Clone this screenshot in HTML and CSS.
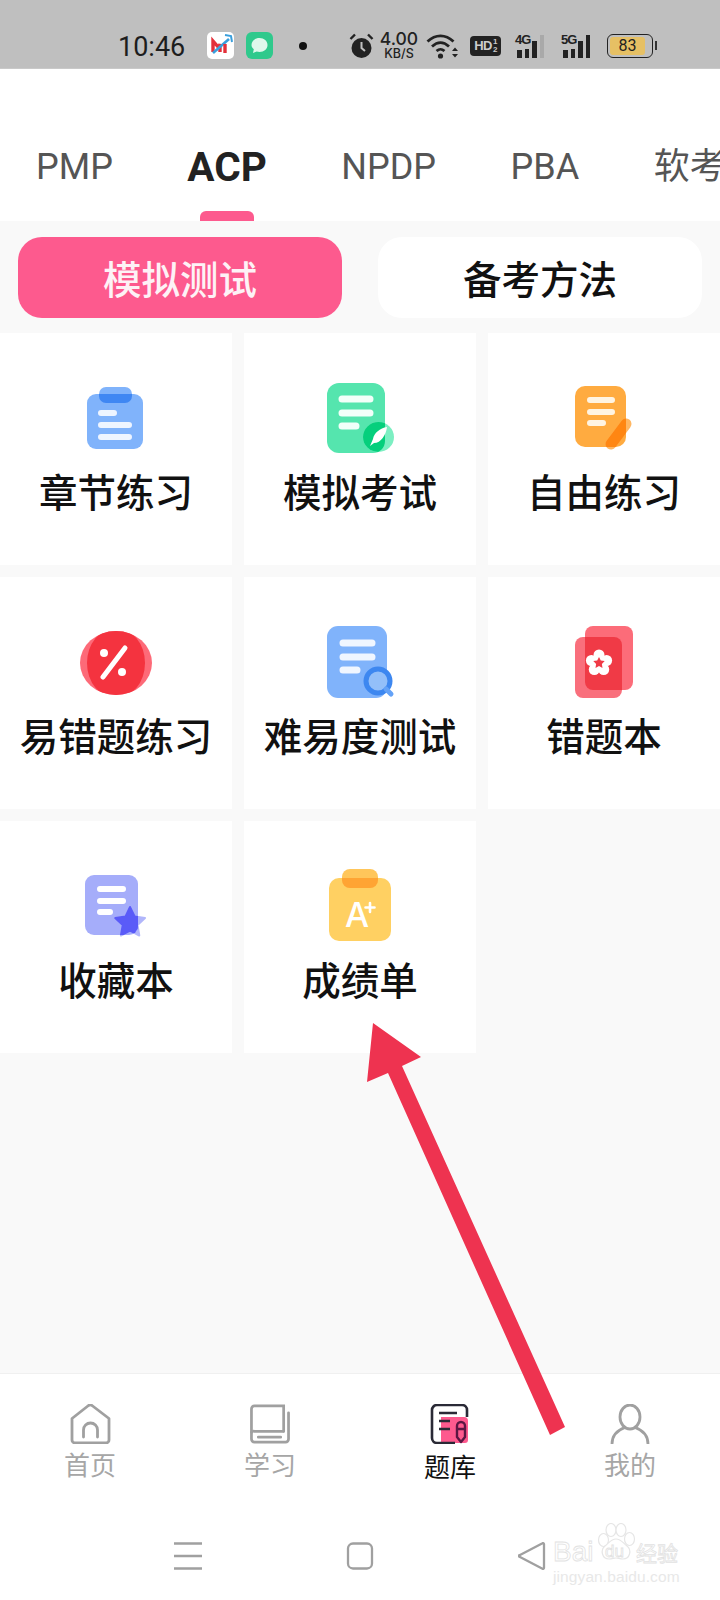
FILE: index.html
```html
<!DOCTYPE html>
<html lang="zh-CN">
<head>
<meta charset="utf-8">
<title>题库</title>
<link rel="stylesheet" href="styles.css">
</head>
<body>
<div class="page">
  <header class="status">
    <span class="time">10:46</span>
    <svg class="app" width="27" height="27" viewBox="0 0 27 27"><rect width="27" height="27" rx="5" fill="#fff"/><path d="M6 20V9l6 7 1-4v8" fill="none" stroke="#e3303a" stroke-width="3.4"/><path d="M6 21 22 7" stroke="#3a9fdc" stroke-width="2.6"/><path d="M18 3l6 1 1 6" fill="none" stroke="#3a9fdc" stroke-width="2"/><path d="M18 12v9" stroke="#e3303a" stroke-width="3.4"/></svg>
    <svg class="app app2" width="27" height="27" viewBox="0 0 27 27"><rect width="27" height="27" rx="6" fill="#2fc98c"/><path d="M13.5 6c4.6 0 8 3 8 7s-3.400 7-8 7c-1 0-2-.2-2.800-.5L7 21l.8-3.800C6.300 16 5.500 14.600 5.500 13c0-4 3.400-7 8-7z" fill="#dff8ec"/></svg>
    <span class="dot"></span>
    <svg class="alarm" width="25" height="26" viewBox="0 0 25 26"><circle cx="12.500" cy="15" r="10" fill="#222"/><path d="M12.500 9v6l3.500 3" fill="none" stroke="#bfbfbf" stroke-width="2"/><path d="M1.500 6 6 1.500M23.500 6 19 1.500" stroke="#222" stroke-width="2.400"/></svg>
    <span class="speed"><span class="speed-num">4.00</span><span class="speed-unit">KB/S</span></span>
    <svg class="wifi" width="33" height="26" viewBox="0 0 33 26"><path d="M1.500 8.500C9.500 1 19.500 1 27.500 8.500M6 13.500c5.500-5 11.500-5 17 0M10.500 18c3-2.500 5-2.500 8 0" fill="none" stroke="#222" stroke-width="2.800"/><circle cx="14.500" cy="23" r="2.600" fill="#222"/><path d="M26 18l3-3.500 3 3.500zM26 21l3 3.500 3-3.500z" fill="#222"/></svg>
    <span class="hd"><span class="hd-main">HD</span><span class="hd-frac"><span>1</span><span>2</span></span></span>
    <span class="signal sig4"><span class="net">4G</span><i class="b1"></i><i class="b2"></i><i class="b3"></i><i class="b4 off"></i></span>
    <span class="signal sig5"><span class="net">5G</span><i class="b1"></i><i class="b2"></i><i class="b3"></i><i class="b4"></i></span>
    <span class="battery"><span class="battery-box"><span class="battery-fill">83</span></span><span class="battery-tip"></span></span>
  </header>

  <nav class="tabs">
    <span class="tab">PMP</span>
    <span class="tab active">ACP</span>
    <span class="tab">NPDP</span>
    <span class="tab">PBA</span>
    <span class="tab">软考</span>
  </nav>

  <main class="content">
    <div class="modes">
      <div class="mode on">模拟测试</div>
      <div class="mode">备考方法</div>
    </div>
    <div class="grid">
      <div class="card">
        <svg class="ico" width="80" height="80" viewBox="0 0 80 80"><rect x="11" y="16" width="56" height="55" rx="9" fill="#80b3fb"/><rect x="23" y="9" width="33" height="16" rx="7" fill="#80b3fb"/><path d="M23 16h33v2a7 7 0 0 1-7 7H30a7 7 0 0 1-7-7z" fill="#3f87f3"/><path d="M25 35h13M25 47h28M25 59h28" stroke="#eef5ff" stroke-width="6" stroke-linecap="round"/></svg>
        <span class="label">章节练习</span>
      </div>
      <div class="card">
        <svg class="ico" width="80" height="80" viewBox="0 0 80 80"><defs><clipPath id="c2"><rect x="7" y="5" width="58" height="70" rx="12"/></clipPath></defs><rect x="7" y="5" width="58" height="70" rx="12" fill="#55e5ae"/><path d="M22 21h28M22 35h28M22 48h14" stroke="#f2fff9" stroke-width="7" stroke-linecap="round"/><ellipse cx="58.500" cy="59" rx="15.500" ry="15" fill="#7cefc2"/><ellipse cx="58.500" cy="59" rx="15.500" ry="15" fill="#06cf7c" clip-path="url(#c2)"/><path d="M67 49c-7 1-13 6-14 12l-3 7 4-3c7 0 12-8 13-16z" fill="#fff"/></svg>
        <span class="label">模拟考试</span>
      </div>
      <div class="card">
        <svg class="ico" width="80" height="80" viewBox="0 0 80 80"><defs><clipPath id="c3"><rect x="11" y="8" width="51" height="61" rx="10"/></clipPath></defs><rect x="11" y="8" width="51" height="61" rx="10" fill="#ffab40"/><path d="M26 22h22M26 34h22M26 45h13" stroke="#fff4e2" stroke-width="6" stroke-linecap="round"/><path d="M62 46 47 66" stroke="#ffb763" stroke-width="11" stroke-linecap="round"/><path d="M62 46 47 66" stroke="#ff8612" stroke-width="11" stroke-linecap="round" clip-path="url(#c3)"/></svg>
        <span class="label">自由练习</span>
      </div>
      <div class="card">
        <svg class="ico" width="80" height="80" viewBox="0 0 80 80"><defs><clipPath id="c4"><ellipse cx="40" cy="41" rx="36" ry="32"/></clipPath></defs><ellipse cx="40" cy="41" rx="36" ry="32" fill="#fd6a78"/><ellipse cx="40" cy="41" rx="29" ry="35" fill="#f4333f" clip-path="url(#c4)"/><path d="M49 26 27 55" stroke="#fff" stroke-width="5" stroke-linecap="round"/><circle cx="28" cy="31" r="4" fill="#fff"/><circle cx="46" cy="50" r="4" fill="#fff"/></svg>
        <span class="label">易错题练习</span>
      </div>
      <div class="card">
        <svg class="ico" width="80" height="80" viewBox="0 0 80 80"><rect x="7" y="4" width="60" height="72" rx="11" fill="#80b3fb"/><path d="M23 21h29M23 35h29M23 48h14" stroke="#f0f6ff" stroke-width="7" stroke-linecap="round"/><circle cx="58" cy="59" r="12" fill="#93bff9" stroke="#3d87f0" stroke-width="5"/><path d="M66 67l5 5" stroke="#64a2f7" stroke-width="5" stroke-linecap="round"/></svg>
        <span class="label">难易度测试</span>
      </div>
      <div class="card">
        <svg class="ico" width="80" height="80" viewBox="0 0 80 80"><defs><clipPath id="c6"><rect x="11" y="15" width="47" height="61" rx="8"/></clipPath></defs><rect x="21" y="4" width="48" height="64" rx="8" fill="#fc6c79"/><rect x="11" y="15" width="47" height="61" rx="8" fill="#f96f7c"/><rect x="21" y="4" width="48" height="64" rx="8" fill="#f03a46" clip-path="url(#c6)"/><g fill="#fff"><circle cx="35" cy="41" r="8"/><circle cx="35" cy="33" r="5.500"/><circle cx="42.600" cy="38.500" r="5.500"/><circle cx="39.700" cy="47.500" r="5.500"/><circle cx="30.300" cy="47.500" r="5.500"/><circle cx="27.400" cy="38.500" r="5.500"/></g><path d="M35 35l1.800 3.600 3.900.5-2.800 2.800.6 4-3.500-1.900-3.500 1.900.6-4-2.800-2.800 3.900-.5z" fill="#f03a46"/></svg>
        <span class="label">错题本</span>
      </div>
      <div class="card">
        <svg class="ico" width="80" height="80" viewBox="0 0 80 80"><defs><clipPath id="c7"><rect x="9" y="9" width="53" height="60" rx="9"/></clipPath></defs><rect x="9" y="9" width="53" height="60" rx="9" fill="#a5adfa"/><path d="M24 23h23M24 35h23M24 46h10" stroke="#fff" stroke-width="6" stroke-linecap="round"/><path d="M54 41l4.800 9.600 10.200 1.500-7.500 7 1.800 10.400-9.300-5-9.100 5 1.800-10.400-7.500-7 10.200-1.500z" fill="#b1b6fb" stroke="#b1b6fb" stroke-width="2" stroke-linejoin="round"/><path d="M54 41l4.800 9.600 10.200 1.500-7.500 7 1.800 10.400-9.300-5-9.100 5 1.800-10.400-7.500-7 10.200-1.500z" fill="#5a5bf8" stroke="#5a5bf8" stroke-width="2" stroke-linejoin="round" clip-path="url(#c7)"/></svg>
        <span class="label">收藏本</span>
      </div>
      <div class="card">
        <svg class="ico" width="80" height="80" viewBox="0 0 80 80"><rect x="9" y="12" width="62" height="63" rx="10" fill="#ffd062"/><rect x="22" y="3" width="36" height="19" rx="8" fill="#ffc65a"/><path d="M22 12h36v2a8 8 0 0 1-8 8H30a8 8 0 0 1-8-8z" fill="#ffa433"/><text class="ico-a" x="37" y="61">A</text><path d="M50 37v9M45.500 41.500h9" stroke="#fff" stroke-width="2.600" stroke-linecap="round"/></svg>
        <span class="label">成绩单</span>
      </div>
    </div>
  </main>

  <footer class="bottom">
    <div class="nav">
      <div class="nav-item">
        <svg class="nav-ico" width="44" height="40" viewBox="0 0 44 40"><path d="M4 14.500 20.500 1.500a3 3 0 0 1 3.500 0L41 14.500V36a3 3 0 0 1-3 3H7a3 3 0 0 1-3-3z" fill="none" stroke="#a0a0a0" stroke-width="2.800" stroke-linejoin="round"/><path d="M15.500 33V26a7 7 0 0 1 14 0v7" fill="none" stroke="#a0a0a0" stroke-width="2.800" stroke-linecap="round"/></svg>
        <span class="nav-label">首页</span>
      </div>
      <div class="nav-item">
        <svg class="nav-ico" width="44" height="40" viewBox="0 0 44 41"><path d="M36 28V2H6a3 3 0 0 0-3 3v31a3 3 0 0 0 3 3h32a3 3 0 0 0 3-3V9" fill="none" stroke="#a0a0a0" stroke-width="2.800" stroke-linecap="round"/><path d="M3 29a3 3 0 0 1 3-1h30M10 34h23" fill="none" stroke="#a0a0a0" stroke-width="2.800" stroke-linecap="round"/></svg>
        <span class="nav-label">学习</span>
      </div>
      <div class="nav-item">
        <svg class="nav-ico" width="44" height="40" viewBox="0 0 44 40"><path d="M13 13h23a4 4 0 0 1 4 4v19a3 3 0 0 1-3 3H13z" fill="#fd5a8e"/><path d="M27 39H9a5 5 0 0 1-5-5V6a5 5 0 0 1 5-5h25a5 5 0 0 1 5 5v7" fill="none" stroke="#2a2a36" stroke-width="2.600"/><path d="M11 9h18M11 17h11M11 25h11" stroke="#2a2a36" stroke-width="2.500"/><path d="M29 22a4 4 0 0 1 8 0v11l-4 5-4-5zM29 25h8" fill="none" stroke="#5b1642" stroke-width="2.400" stroke-linejoin="round"/></svg>
        <span class="nav-label current">题库</span>
      </div>
      <div class="nav-item">
        <svg class="nav-ico" width="44" height="40" viewBox="0 0 44 40"><ellipse cx="22" cy="13" rx="10" ry="12" fill="none" stroke="#a0a0a0" stroke-width="2.800"/><path d="M4 40c0-9 6-14 13-16.500M40 40c0-9-6-14-13-16.500" fill="none" stroke="#a0a0a0" stroke-width="2.800"/></svg>
        <span class="nav-label">我的</span>
      </div>
    </div>
    <div class="sysbar">
      <svg width="28" height="28" viewBox="0 0 28 28"><path d="M0 1.500h28M0 14h28M0 26.500h28" stroke="#a0a0a0" stroke-width="2.500"/></svg>
      <svg width="28" height="28" viewBox="0 0 28 28"><rect x="2" y="1.500" width="24" height="25" rx="5" fill="none" stroke="#a0a0a0" stroke-width="2.300"/></svg>
      <svg width="28" height="28" viewBox="0 0 28 28"><path d="M26 2v24a1 1 0 0 1-1.500.8L2 15a1 1 0 0 1 0-2L24.500 1.200A1 1 0 0 1 26 2z" fill="none" stroke="#a0a0a0" stroke-width="2.300" stroke-linejoin="round"/></svg>
    </div>
  </footer>

  <svg class="arrow" width="720" height="1600" viewBox="0 0 720 1600"><path d="M373 1023 421 1057 402 1066 565 1427 550 1435 388 1073 367 1082z" fill="#ee3350"/></svg>

  <div class="mark">
    <svg class="paw" width="40" height="38" viewBox="0 0 40 38"><g fill="#fff" stroke="#e6e6e6" stroke-width="1.200"><ellipse cx="6.500" cy="17" rx="5" ry="6.500"/><ellipse cx="14" cy="7" rx="5" ry="6.500"/><ellipse cx="24" cy="7" rx="5" ry="6.500"/><ellipse cx="32.500" cy="16" rx="5" ry="6.500"/><path d="M19 16c5 0 7 4 11 7 5 4 3 13-4 13-3 0-5-1-7-1s-4 1-7 1c-7 0-9-9-4-13 4-3 6-7 11-7z"/></g></svg>
    <div class="mark-row"><span class="mark-bai">Bai</span><span class="mark-du">du</span><span class="mark-jy">经验</span></div>
    <div class="mark-url">jingyan.baidu.com</div>
  </div>
</div>
</body>
</html>
```

FILE: styles.css
```css
* { box-sizing: border-box; }
html, body { margin: 0; padding: 0; }
body { font-family: "Noto Sans CJK SC", Roboto, sans-serif; background: #fff; }
.page { position: relative; width: 720px; height: 1600px; overflow: hidden; display: flex; flex-direction: column; background: #fff; }

.status { height: 69px; flex: none; background: #bfbfbf; display: flex; align-items: center; padding: 23px 0 0 118px; color: #1d1d1d; border-bottom: 1px solid #c9c9c9; }
.time { font: 400 27px/1 Roboto, sans-serif; width: 68px; margin: 3px 21px 0 0; white-space: nowrap; }
.app2 { margin-left: 12px; }
.dot { width: 8px; height: 8px; border-radius: 50%; background: #111; margin: 0 42px 0 26px; }
.speed { display: flex; flex-direction: column; align-items: center; width: 38px; margin: 0 8px 0 6px; color: #222; }
.speed-num { font: 500 17.500px/14px Inter, sans-serif; white-space: nowrap; }
.speed-unit { font: 500 12.500px/12px Inter, sans-serif; margin-top: 2px; white-space: nowrap; }
.hd { display: flex; align-items: center; justify-content: center; gap: 1px; width: 31px; height: 20px; margin-left: 11px; border-radius: 4px; background: #222; color: #ccc; letter-spacing: -.5px; }
.hd-main { font: 700 13px/14px "Liberation Sans", sans-serif; }
.hd-frac { display: flex; flex-direction: column; font: 700 8px/8px "Liberation Sans", sans-serif; }
.signal { position: relative; display: flex; align-items: flex-end; gap: 3px; height: 24px; padding-left: 2px; }
.sig4 { width: 33px; margin-left: 14px; }
.sig5 { width: 35px; margin-left: 13px; }
.signal i { display: block; width: 4.500px; background: #222; }
.signal .off { background: #a9a9a9; }
.b1 { height: 8px; }
.b2 { height: 9px; }
.b3 { height: 17px; }
.b4 { height: 23px; }
.net { position: absolute; left: 0; top: -1px; font: 700 13px/13px "Liberation Sans", sans-serif; letter-spacing: -1px; color: #222; }
.battery { display: flex; align-items: center; gap: 2px; margin-left: 11px; }
.battery-box { width: 46px; height: 24px; border: 1.500px solid #222; border-radius: 6px; padding: 2px; display: flex; }
.battery-fill { width: 35px; background: #e6c064; border-radius: 3px; color: #222; font: 400 16px/17px Roboto, sans-serif; text-align: center; }
.battery-tip { width: 2px; height: 9px; background: #333; }

.tabs { height: 152px; flex: none; display: flex; align-items: center; gap: 74.500px; padding: 44px 0 0 36px; overflow: hidden; white-space: nowrap; font: 400 36px/1 Roboto, "Noto Sans CJK SC", sans-serif; color: #555; }
.tab { position: relative; flex: none; }
.tab.active { font-size: 40.500px; font-weight: 700; color: #222; }
.tab.active::after { content: ""; position: absolute; left: 13px; top: 64px; width: 54px; height: 11px; border-radius: 6px 6px 0 0; background: #fd5a8e; }

.content { flex: 1; background: #f9f9f9; }
.modes { display: flex; justify-content: space-between; padding: 16px 18px 15px; }
.mode { width: 324px; height: 81px; padding-bottom: 2px; border-radius: 24px; background: #fff; color: #111; font-size: 38.500px; font-weight: 500; display: flex; align-items: center; justify-content: center; }
.mode.on { background: #fd5a8e; color: #fdf2f6; }
.grid { display: grid; grid-template-columns: repeat(3, 232px); grid-auto-rows: 232px; gap: 12px; }
.card { background: #fff; display: flex; flex-direction: column; align-items: center; padding-top: 45px; }
.ico { display: block; flex: none; }
.label { margin-top: 6px; font-size: 38.500px; font-weight: 500; line-height: 52px; color: #111; white-space: nowrap; }
.ico-a { font: 500 34px/1 Inter, sans-serif; fill: #fff; text-anchor: middle; }

.bottom { flex: none; height: 227px; background: #fff; border-top: 1px solid #f0f0f0; }
.nav { display: grid; grid-template-columns: repeat(4, 180px); height: 126px; padding-top: 30px; }
.nav-item { display: flex; flex-direction: column; align-items: center; }
.nav-ico { display: block; flex: none; }
.nav-label { margin-top: 3px; font-size: 26px; line-height: 34px; color: #a6a6a6; }
.nav-label.current { color: #111; margin-top: 5px; }
.sysbar { display: flex; justify-content: center; gap: 144px; margin-top: 42px; }
.sysbar svg { display: block; }

.arrow { position: absolute; left: 0; top: 0; pointer-events: none; }

.mark { position: absolute; left: 553px; top: 1523px; width: 128px; color: #fff; font-family: "Liberation Sans", sans-serif; }
.paw { position: absolute; left: 44px; top: 0; }
.mark-row { position: absolute; left: 0; top: 16px; width: 128px; display: flex; align-items: center; font-size: 28px; line-height: 26px; white-space: nowrap; -webkit-text-stroke: .8px #e2e2e2; }
.mark-bai { width: 46px; }
.mark-du { position: relative; width: 37px; padding-left: 6px; font-size: 17px; }
.mark-jy { font: 400 21px/26px "Noto Sans CJK SC", sans-serif; }
.mark-url { position: absolute; left: 0; top: 46px; width: 128px; font-size: 15.500px; line-height: 16px; white-space: nowrap; letter-spacing: .1px; color: #e8e8e8; }
```
